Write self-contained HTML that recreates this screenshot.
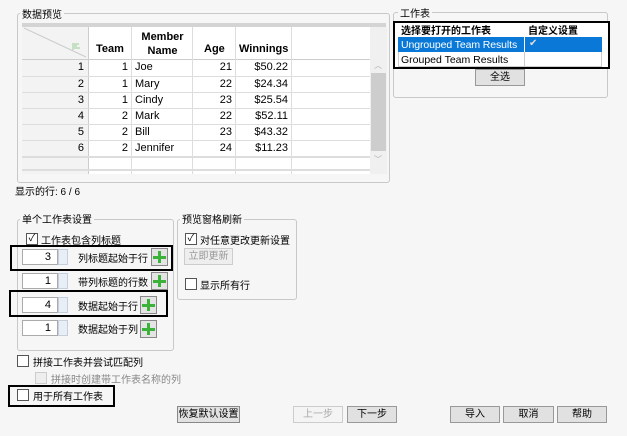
<!DOCTYPE html>
<html><head><meta charset="utf-8"><style>
*{box-sizing:border-box;margin:0;padding:0}
body{width:627px;height:436px;background:#f6f6f6;font-family:"Liberation Sans","Noto Sans CJK SC",sans-serif;font-size:10px;line-height:16px;color:#000;position:relative;overflow:hidden;white-space:nowrap}
.a{position:absolute}
.grp{position:absolute;border:1px solid #c8c8c8;border-radius:3px}
.lbl{position:absolute;background:#f6f6f6;padding:0 2px;font-size:10px;line-height:13px}
table{border-collapse:collapse}
.cb{position:absolute;width:12px;height:12px;border:1px solid #555;background:#fff;font-size:10px;line-height:10px;text-align:center}
.btn{position:absolute;height:17px;border:1px solid #999;background:#e1e1e1;font-size:10px;line-height:15px;text-align:center}
.spin{position:absolute;width:36px;height:16px;border:1px solid #aaa;background:#fff;text-align:right;padding-right:6px;line-height:14px;font-size:11px}
.sp{position:absolute;width:10px;height:16px;background:#e8eef5;border:1px solid #c5cfdb}
.plus{position:absolute;width:17px;height:18px;border:1px solid #888;background:#e4e4e4}
.plus:before{content:"";position:absolute;left:6px;top:2px;width:3px;height:12px;background:#3bb33b}
.plus:after{content:"";position:absolute;left:1px;top:7px;width:13px;height:3px;background:#3bb33b}
.box{position:absolute;border:2px solid #000}
</style></head><body>

<div class="grp" style="left:17px;top:13px;width:373px;height:170px"></div>
<div class="lbl" style="left:20px;top:9px">数据预览</div>
<div class="a" style="left:22px;top:23px;width:364px;height:4px;background:#d4d4d4"></div>
<div class="a" style="left:22px;top:27px;width:348px;height:147px;background:#fff"></div>
<div class="a" style="left:22px;top:27px;width:67px;height:147px;background:#f3f3f3;border-right:1px solid #ccc"></div>
<svg class="a" style="left:22px;top:27px" width="67" height="32"><line x1="2" y1="1" x2="64" y2="30" stroke="#ccc"/><g stroke="#9c9" stroke-width="1"><line x1="51" y1="16" x2="51" y2="23"/><line x1="52" y1="17" x2="57" y2="17"/><line x1="52" y1="19" x2="55" y2="19"/><line x1="52" y1="21" x2="58" y2="21"/></g></svg>
<div class="a" style="left:22px;top:59px;width:348px;height:1px;background:#ccc"></div>
<div class="a" style="left:89px;top:27px;font-weight:bold;font-size:11px;line-height:13px">
<div class="a" style="left:0;top:0;width:43px;height:147px;border-right:1px solid #ddd"></div>
<div class="a" style="left:43px;top:0;width:61px;height:147px;border-right:1px solid #ddd"></div>
<div class="a" style="left:104px;top:0;width:43px;height:147px;border-right:1px solid #ddd"></div>
<div class="a" style="left:147px;top:0;width:56px;height:147px;border-right:1px solid #ddd"></div>
<div class="a" style="left:7px;top:16px">Team</div>
<div class="a" style="left:43px;top:3px;width:61px;text-align:center;line-height:14px">Member<br>Name</div>
<div class="a" style="left:115px;top:16px">Age</div>
<div class="a" style="left:150px;top:16px">Winnings</div>
</div>
<div class="a" style="left:22px;top:60px;font-size:11px;line-height:15px">
<table style="width:348px">
<tr style="height:16px;border-bottom:1px solid #ddd"><td style="width:67px;text-align:right;padding-right:5px">1</td><td style="width:43px;text-align:right;padding-right:4px">1</td><td style="width:61px;padding-left:3px">Joe</td><td style="width:43px;text-align:right;padding-right:4px">21</td><td style="width:56px;text-align:right;padding-right:4px">$50.22</td><td></td></tr>
<tr style="height:16px;border-bottom:1px solid #ddd"><td style="text-align:right;padding-right:5px">2</td><td style="text-align:right;padding-right:4px">1</td><td style="padding-left:3px">Mary</td><td style="text-align:right;padding-right:4px">22</td><td style="text-align:right;padding-right:4px">$24.34</td><td></td></tr>
<tr style="height:16px;border-bottom:1px solid #ddd"><td style="text-align:right;padding-right:5px">3</td><td style="text-align:right;padding-right:4px">1</td><td style="padding-left:3px">Cindy</td><td style="text-align:right;padding-right:4px">23</td><td style="text-align:right;padding-right:4px">$25.54</td><td></td></tr>
<tr style="height:16px;border-bottom:1px solid #ddd"><td style="text-align:right;padding-right:5px">4</td><td style="text-align:right;padding-right:4px">2</td><td style="padding-left:3px">Mark</td><td style="text-align:right;padding-right:4px">22</td><td style="text-align:right;padding-right:4px">$52.11</td><td></td></tr>
<tr style="height:16px;border-bottom:1px solid #ddd"><td style="text-align:right;padding-right:5px">5</td><td style="text-align:right;padding-right:4px">2</td><td style="padding-left:3px">Bill</td><td style="text-align:right;padding-right:4px">23</td><td style="text-align:right;padding-right:4px">$43.32</td><td></td></tr>
<tr style="height:16px;border-bottom:2px solid #ddd"><td style="text-align:right;padding-right:5px">6</td><td style="text-align:right;padding-right:4px">2</td><td style="padding-left:3px">Jennifer</td><td style="text-align:right;padding-right:4px">24</td><td style="text-align:right;padding-right:4px">$11.23</td><td></td></tr>
</table></div>
<div class="a" style="left:22px;top:169px;width:348px;height:2px;background:#ddd"></div>
<div class="a" style="left:370px;top:27px;width:17px;height:147px;background:#f0f0f0"></div>
<div class="a" style="left:371px;top:73px;width:15px;height:78px;background:#cdcdcd"></div>
<div class="a" style="left:374px;top:58px;font-size:8px;color:#aaa">︿</div>
<div class="a" style="left:374px;top:152px;font-size:8px;color:#aaa">﹀</div>
<div class="a" style="left:15px;top:185px;font-size:10px">显示的行: 6 / 6</div>

<div class="grp" style="left:393px;top:12px;width:215px;height:86px"></div>
<div class="lbl" style="left:398px;top:8px">工作表</div>
<div class="a" style="left:393px;top:21px;width:217px;height:48px;border:2px solid #000;background:#fff"></div>
<div class="a" style="left:401px;top:24px;font-weight:bold;font-size:10px">选择要打开的工作表</div>
<div class="a" style="left:528px;top:24px;font-weight:bold;font-size:10px">自定义设置</div>
<div class="a" style="left:398px;top:37px;width:204px;height:15px;background:#0a78d7"></div>
<div class="a" style="left:398px;top:52px;width:127px;height:15px;border:1px solid #ccc;border-top:0"></div>
<div class="a" style="left:525px;top:52px;width:77px;height:15px;border-bottom:1px solid #ccc;border-right:1px solid #ccc"></div>
<div class="a" style="left:524px;top:37px;width:1px;height:15px;background:#fff"></div>
<div class="a" style="left:401px;top:37px;color:#fff;font-size:10.5px;letter-spacing:-0.1px">Ungrouped Team Results</div>
<div class="a" style="left:529px;top:36px;color:#ddd;font-size:10px">✔</div>
<div class="a" style="left:401px;top:52px;font-size:10.5px">Grouped Team Results</div>
<div class="btn" style="left:475px;top:69px;width:50px">全选</div>

<div class="grp" style="left:17px;top:219px;width:157px;height:132px"></div>
<div class="lbl" style="left:20px;top:214px">单个工作表设置</div>
<div class="cb" style="left:26px;top:233px">✓</div>
<div class="a" style="left:41px;top:234px">工作表包含列标题</div>

<div class="spin" style="left:22px;top:249px">3</div><div class="sp" style="left:58px;top:249px"></div><div class="a" style="left:78px;top:252px">列标题起始于行</div><div class="plus" style="left:151px;top:248px"></div>
<div class="spin" style="left:22px;top:273px">1</div><div class="sp" style="left:58px;top:273px"></div><div class="a" style="left:78px;top:276px">带列标题的行数</div><div class="plus" style="left:151px;top:272px"></div>
<div class="spin" style="left:22px;top:297px">4</div><div class="sp" style="left:58px;top:297px"></div><div class="a" style="left:78px;top:300px">数据起始于行</div><div class="plus" style="left:140px;top:296px"></div>
<div class="spin" style="left:22px;top:320px">1</div><div class="sp" style="left:58px;top:320px"></div><div class="a" style="left:78px;top:323px">数据起始于列</div><div class="plus" style="left:140px;top:320px"></div>
<div class="box" style="left:10px;top:245px;width:163px;height:26px"></div>
<div class="box" style="left:9px;top:290px;width:159px;height:27px"></div>

<div class="grp" style="left:177px;top:219px;width:120px;height:81px"></div>
<div class="lbl" style="left:180px;top:214px">预览窗格刷新</div>
<div class="cb" style="left:185px;top:233px">✓</div>
<div class="a" style="left:200px;top:234px">对任意更改更新设置</div>
<div class="btn" style="left:184px;top:248px;width:49px;color:#999;border-color:#ccc;background:#eee">立即更新</div>
<div class="cb" style="left:185px;top:278px"></div>
<div class="a" style="left:200px;top:279px">显示所有行</div>

<div class="cb" style="left:17px;top:355px"></div>
<div class="a" style="left:33px;top:356px">拼接工作表并尝试匹配列</div>
<div class="cb" style="left:35px;top:372px;border-color:#ccc;background:#eee"></div>
<div class="a" style="left:51px;top:373px;color:#888">拼接时创建带工作表名称的列</div>
<div class="cb" style="left:17px;top:389px"></div>
<div class="a" style="left:33px;top:390px">用于所有工作表</div>
<div class="box" style="left:8px;top:385px;width:107px;height:22px"></div>

<div class="btn" style="left:177px;top:406px;width:63px;background:#e1e1e1;border-color:#888">恢复默认设置</div>
<div class="btn" style="left:293px;top:406px;width:50px;color:#aaa;border-color:#ccc;background:#f4f4f4">上一步</div>
<div class="btn" style="left:347px;top:406px;width:50px">下一步</div>
<div class="btn" style="left:450px;top:406px;width:50px">导入</div>
<div class="btn" style="left:503px;top:406px;width:51px">取消</div>
<div class="btn" style="left:557px;top:406px;width:50px">帮助</div>
</body></html>
